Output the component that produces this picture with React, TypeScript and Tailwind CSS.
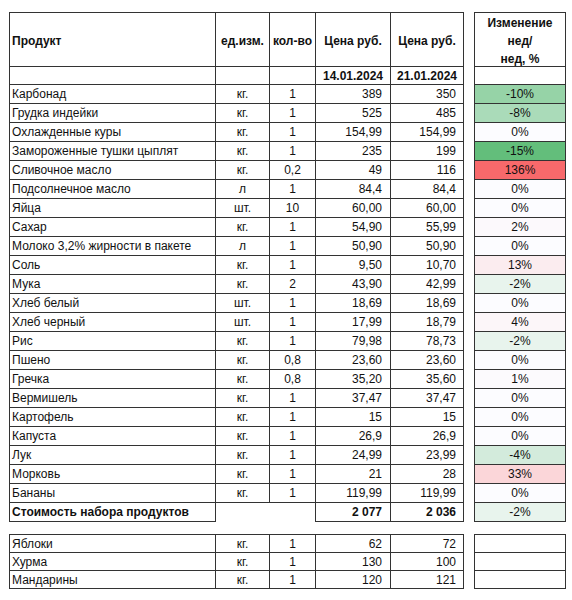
import React from "react";

type Row = { name: string; unit: string; qty: string; p1: string; p2: string; ch: string; bg: string };

const rows: Row[] = [
  { name: "Карбонад", unit: "кг.", qty: "1", p1: "389", p2: "350", ch: "-10%", bg: "bg-[#96d3a7]" },
  { name: "Грудка индейки", unit: "кг.", qty: "1", p1: "525", p2: "485", ch: "-8%", bg: "bg-[#aadbb9]" },
  { name: "Охлажденные куры", unit: "кг.", qty: "1", p1: "154,99", p2: "154,99", ch: "0%", bg: "bg-[#fcfcff]" },
  { name: "Замороженные тушки цыплят", unit: "кг.", qty: "1", p1: "235", p2: "199", ch: "-15%", bg: "bg-[#63be7b]" },
  { name: "Сливочное масло", unit: "кг.", qty: "0,2", p1: "49", p2: "116", ch: "136%", bg: "bg-[#f8696b]" },
  { name: "Подсолнечное масло", unit: "л", qty: "1", p1: "84,4", p2: "84,4", ch: "0%", bg: "bg-[#fcfcff]" },
  { name: "Яйца", unit: "шт.", qty: "10", p1: "60,00", p2: "60,00", ch: "0%", bg: "bg-[#fcfcff]" },
  { name: "Сахар", unit: "кг.", qty: "1", p1: "54,90", p2: "55,99", ch: "2%", bg: "bg-[#fcf9fc]" },
  { name: "Молоко 3,2% жирности в пакете", unit: "л", qty: "1", p1: "50,90", p2: "50,90", ch: "0%", bg: "bg-[#fcfcff]" },
  { name: "Соль", unit: "кг.", qty: "1", p1: "9,50", p2: "10,70", ch: "13%", bg: "bg-[#fbecef]" },
  { name: "Мука", unit: "кг.", qty: "2", p1: "43,90", p2: "42,99", ch: "-2%", bg: "bg-[#e8f4ed]" },
  { name: "Хлеб белый", unit: "шт.", qty: "1", p1: "18,69", p2: "18,69", ch: "0%", bg: "bg-[#fcfcff]" },
  { name: "Хлеб черный", unit: "шт.", qty: "1", p1: "17,99", p2: "18,79", ch: "4%", bg: "bg-[#fcf6f9]" },
  { name: "Рис", unit: "кг.", qty: "1", p1: "79,98", p2: "78,73", ch: "-2%", bg: "bg-[#e8f4ed]" },
  { name: "Пшено", unit: "кг.", qty: "0,8", p1: "23,60", p2: "23,60", ch: "0%", bg: "bg-[#fcfcff]" },
  { name: "Гречка", unit: "кг.", qty: "0,8", p1: "35,20", p2: "35,60", ch: "1%", bg: "bg-[#fcfafd]" },
  { name: "Вермишель", unit: "кг.", qty: "1", p1: "37,47", p2: "37,47", ch: "0%", bg: "bg-[#fcfcff]" },
  { name: "Картофель", unit: "кг.", qty: "1", p1: "15", p2: "15", ch: "0%", bg: "bg-[#fcfcff]" },
  { name: "Капуста", unit: "кг.", qty: "1", p1: "26,9", p2: "26,9", ch: "0%", bg: "bg-[#fcfcff]" },
  { name: "Лук", unit: "кг.", qty: "1", p1: "24,99", p2: "23,99", ch: "-4%", bg: "bg-[#d3ebdc]" },
  { name: "Морковь", unit: "кг.", qty: "1", p1: "21", p2: "28", ch: "33%", bg: "bg-[#fbd6d9]" },
  { name: "Бананы", unit: "кг.", qty: "1", p1: "119,99", p2: "119,99", ch: "0%", bg: "bg-[#fcfcff]" },
];

const extra = [
  { name: "Яблоки", unit: "кг.", qty: "1", p1: "62", p2: "72" },
  { name: "Хурма", unit: "кг.", qty: "1", p1: "130", p2: "100" },
  { name: "Мандарины", unit: "кг.", qty: "1", p1: "120", p2: "121" },
];

const B = "border-[#333333]";

function DataRow({ r, h }: { r: { name: string; unit: string; qty: string; p1: string; p2: string; ch?: string; bg?: string }; h: string }) {
  return (
    <div className={`flex ${h}`}>
      <div className={`w-[207px] border-l border-r border-b ${B} pl-[2px] flex items-center`}>{r.name}</div>
      <div className={`w-[54px] border-r border-b ${B} flex items-center justify-center`}>{r.unit}</div>
      <div className={`w-[46px] border-r border-b ${B} flex items-center justify-center`}>{r.qty}</div>
      <div className={`w-[75px] border-r border-b ${B} flex items-center justify-end pr-[8px]`}>{r.p1}</div>
      <div className={`w-[73px] border-r border-b ${B} flex items-center justify-end pr-[7px]`}>{r.p2}</div>
      <div className="w-[10px]" />
      <div className={`w-[92px] border-l border-r border-b ${B} flex items-center justify-center ${r.bg ?? ""}`}>{r.ch ?? ""}</div>
    </div>
  );
}

export default function App() {
  return (
    <div className="w-[572px] h-[600px] bg-white pl-[9px] pt-[12px] text-[12px] text-[#111111] leading-none" style={{ fontFamily: '"Liberation Sans", Arial, sans-serif' }}>
      {/* Header */}
      <div className="flex h-[55px] font-bold">
        <div className={`w-[207px] border-l border-r border-t border-b ${B} pl-[2px] pt-[2px] flex items-center`}>Продукт</div>
        <div className={`w-[54px] border-r border-t border-b ${B} pt-[2px] flex items-center justify-center`}>ед.изм.</div>
        <div className={`w-[46px] border-r border-t border-b ${B} pt-[2px] flex items-center justify-center`}>кол-во</div>
        <div className={`w-[75px] border-r border-t border-b ${B} pt-[2px] flex items-center justify-center`}>Цена руб.</div>
        <div className={`w-[73px] border-r border-t border-b ${B} pt-[2px] flex items-center justify-center`}>Цена руб.</div>
        <div className="w-[10px]" />
        <div className={`w-[92px] border-l border-r border-t border-b ${B} pt-[3px] flex flex-col items-center justify-center leading-[18px] text-center`}>
          <span>Изменение</span>
          <span>нед/</span>
          <span>нед, %</span>
        </div>
      </div>
      {/* Dates */}
      <div className="flex h-[18px] font-bold">
        <div className={`w-[207px] border-l border-r border-b ${B}`} />
        <div className={`w-[54px] border-r border-b ${B}`} />
        <div className={`w-[46px] border-r border-b ${B}`} />
        <div className={`w-[75px] border-r border-b ${B} flex items-center justify-center`}>14.01.2024</div>
        <div className={`w-[73px] border-r border-b ${B} flex items-center justify-center`}>21.01.2024</div>
        <div className="w-[10px]" />
        <div className={`w-[92px] border-l border-r border-b ${B}`} />
      </div>
      {rows.map((r) => (
        <DataRow key={r.name} r={r} h="h-[19px]" />
      ))}
      {/* Total */}
      <div className="flex h-[19px]">
        <div className={`w-[207px] border-l border-r border-b ${B} pl-[2px] flex items-center font-bold`}>Стоимость набора продуктов</div>
        <div className="w-[54px]" />
        <div className={`w-[46px] border-r ${B}`} />
        <div className={`w-[75px] border-r border-b ${B} flex items-center justify-end pr-[8px] font-bold`}>2 077</div>
        <div className={`w-[73px] border-r border-b ${B} flex items-center justify-end pr-[7px] font-bold`}>2 036</div>
        <div className="w-[10px]" />
        <div className={`w-[92px] border-l border-r border-b ${B} flex items-center justify-center bg-[#e8f4ed]`}>-2%</div>
      </div>
      <div className="h-[12px]" />
      <div className="flex h-[1px]">
        <div className="w-[455px] bg-[#333333]" />
        <div className="w-[10px]" />
        <div className="w-[92px] bg-[#333333]" />
      </div>
      {extra.map((r) => (
        <DataRow key={r.name} r={r} h="h-[18px]" />
      ))}
    </div>
  );
}
